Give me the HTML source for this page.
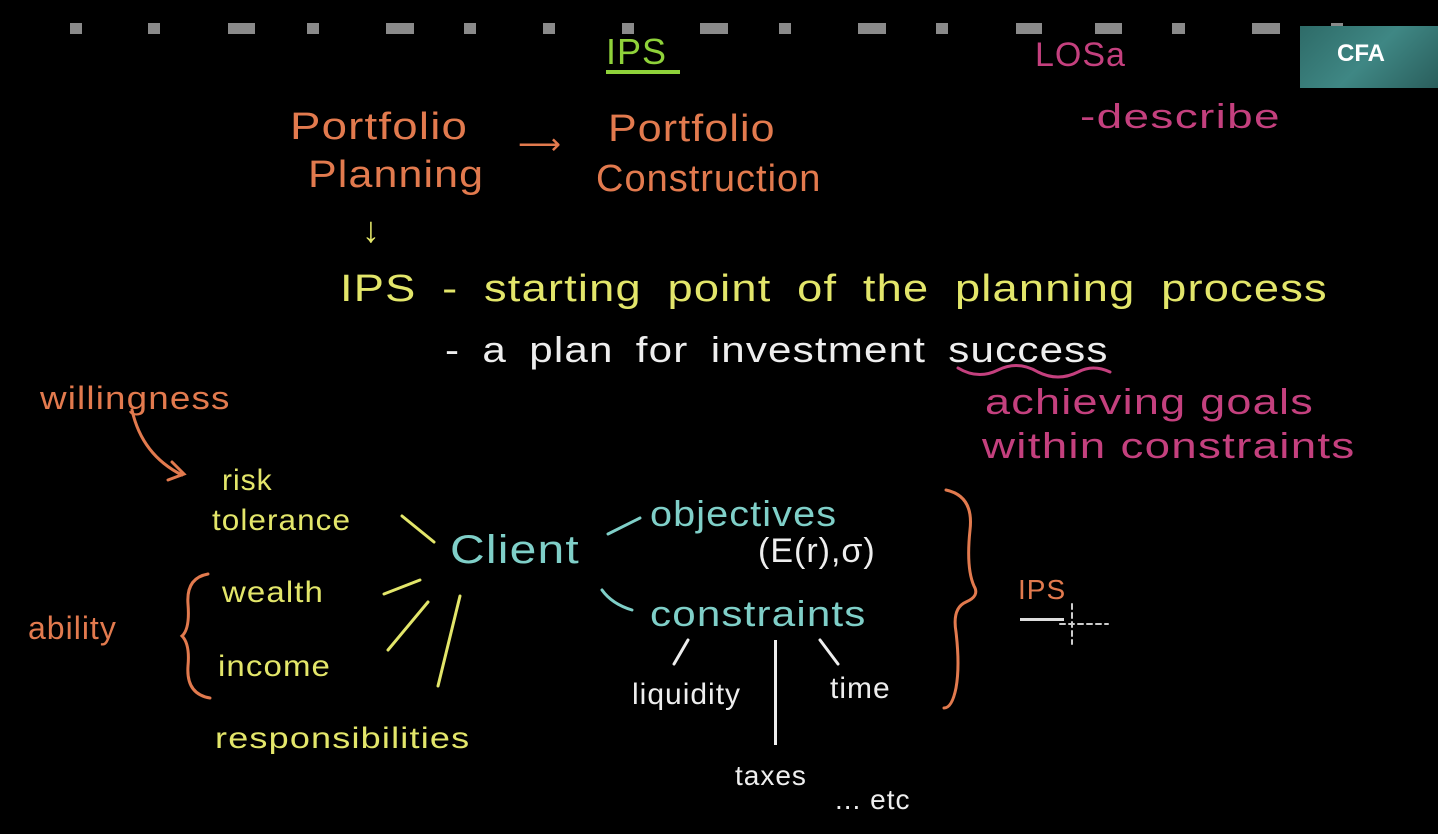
<!DOCTYPE html><html><head><meta charset="utf-8"><style>
body{margin:0;width:1438px;height:834px;background:#000;overflow:hidden;position:relative;font-family:"Liberation Sans",sans-serif}
.s{position:absolute;top:23px;height:11px;background:#8a8a8a}
.t{position:absolute;white-space:nowrap;line-height:1;letter-spacing:1px;transform-origin:left top}
.o{color:#e27a4e}.y{color:#e3e66a}.w{color:#eeeeee}.p{color:#c4407e}.c{color:#7fcfc8}.g{color:#8fd23a}
</style></head><body>
<div class="s" style="left:70px;width:12px"></div>
<div class="s" style="left:148px;width:12px"></div>
<div class="s" style="left:228px;width:27px"></div>
<div class="s" style="left:307px;width:12px"></div>
<div class="s" style="left:386px;width:28px"></div>
<div class="s" style="left:464px;width:12px"></div>
<div class="s" style="left:543px;width:12px"></div>
<div class="s" style="left:622px;width:12px"></div>
<div class="s" style="left:700px;width:28px"></div>
<div class="s" style="left:779px;width:12px"></div>
<div class="s" style="left:858px;width:28px"></div>
<div class="s" style="left:936px;width:12px"></div>
<div class="s" style="left:1016px;width:26px"></div>
<div class="s" style="left:1095px;width:27px"></div>
<div class="s" style="left:1172px;width:13px"></div>
<div class="s" style="left:1252px;width:28px"></div>
<div class="s" style="left:1331px;width:12px"></div>
<div style="position:absolute;left:1300px;top:26px;width:138px;height:62px;background:linear-gradient(135deg,#2e6b68,#3f8784 50%,#2a5e5c);"></div>
<div class="t" style="left:1337px;top:42px;color:#fff;font-weight:bold;font-size:24px;letter-spacing:0">CFA</div>
<div class="t g" style="left:606px;top:34px;font-size:36px">IPS</div>
<div style="position:absolute;left:606px;top:70px;width:74px;height:4px;background:#8fd23a"></div>
<div class="t p" style="left:1035px;top:38px;font-size:34px">LOSa</div>
<div class="t p" style="left:1080px;top:100px;font-size:34px;transform:scaleX(1.35)">-describe</div>
<div class="t o" style="left:290px;top:108px;font-size:38px;transform:scaleX(1.2)">Portfolio</div>
<div class="t o" style="left:308px;top:156px;font-size:38px;transform:scaleX(1.13)">Planning</div>
<div class="t o" style="left:518px;top:130px;font-size:30px">⟶</div>
<div class="t o" style="left:608px;top:110px;font-size:38px;transform:scaleX(1.13)">Portfolio</div>
<div class="t o" style="left:596px;top:160px;font-size:38px">Construction</div>
<div class="t y" style="left:362px;top:212px;font-size:36px">↓</div>
<div class="t y" style="left:340px;top:270px;font-size:38px;word-spacing:10px;transform:scaleX(1.19)">IPS - starting point of the planning process</div>
<div class="t w" style="left:445px;top:332px;font-size:36px;word-spacing:8px;transform:scaleX(1.17)">- a plan for investment success</div>
<svg style="position:absolute;left:0;top:0" width="1438" height="834" fill="none" stroke-linecap="round">
<path d="M958 368 q20 12 40 2 q20 -10 40 2 q20 10 40 0 q15 -8 32 0" stroke="#c4407e" stroke-width="3"/>
<path d="M132 410 q10 45 50 65 M172 462 l12 12 l-16 6" stroke="#e27a4e" stroke-width="3"/>
<path d="M402 516 l32 26 M384 594 l36 -14 M388 650 l40 -48 M438 686 l22 -90" stroke="#e3e66a" stroke-width="3"/>
<path d="M608 534 l32 -16 M602 590 q10 14 30 20" stroke="#7fcfc8" stroke-width="3"/>
<path d="M674 664 l14 -24 M820 640 l18 24" stroke="#eee" stroke-width="3"/>
<path d="M208 574 q-22 4 -20 30 q2 25 -6 32 q8 8 6 30 q-2 28 22 32" stroke="#e27a4e" stroke-width="3"/>
<path d="M946 490 q28 6 24 40 q-4 38 4 56 q6 10 -8 16 q-14 6 -10 30 q4 34 0 56 q-4 20 -12 20" stroke="#e27a4e" stroke-width="3"/>
<path d="M1072 604 v40 M1060 624 h48" stroke="#ccc" stroke-width="2" stroke-dasharray="5 4"/>
</svg>
<div class="t p" style="left:985px;top:384px;font-size:36px;transform:scaleX(1.25)">achieving goals</div>
<div class="t p" style="left:982px;top:428px;font-size:36px;transform:scaleX(1.27)">within constraints</div>
<div class="t o" style="left:40px;top:382px;font-size:32px;transform:scaleX(1.15)">willingness</div>
<div class="t y" style="left:222px;top:466px;font-size:30px">risk</div>
<div class="t y" style="left:212px;top:506px;font-size:30px;transform:scaleX(1.05)">tolerance</div>
<div class="t c" style="left:450px;top:530px;font-size:40px;transform:scaleX(1.2)">Client</div>
<div class="t c" style="left:650px;top:496px;font-size:36px;transform:scaleX(1.1)">objectives</div>
<div class="t w" style="left:758px;top:534px;font-size:34px">(E(r),σ)</div>
<div class="t c" style="left:650px;top:596px;font-size:36px;transform:scaleX(1.17)">constraints</div>
<div class="t o" style="left:28px;top:612px;font-size:32px">ability</div>
<div class="t y" style="left:222px;top:578px;font-size:30px;transform:scaleX(1.1)">wealth</div>
<div class="t y" style="left:218px;top:652px;font-size:30px;transform:scaleX(1.1)">income</div>
<div class="t y" style="left:215px;top:724px;font-size:30px;transform:scaleX(1.2)">responsibilities</div>
<div class="t w" style="left:632px;top:680px;font-size:30px">liquidity</div>
<div style="position:absolute;left:774px;top:640px;width:3px;height:105px;background:#eee"></div>
<div class="t w" style="left:830px;top:674px;font-size:30px">time</div>
<div class="t w" style="left:735px;top:762px;font-size:28px">taxes</div>
<div class="t w" style="left:835px;top:786px;font-size:28px">... etc</div>
<div class="t o" style="left:1018px;top:576px;font-size:28px">IPS</div>
<div style="position:absolute;left:1020px;top:618px;width:44px;height:3px;background:#ddd"></div>
</body></html>
